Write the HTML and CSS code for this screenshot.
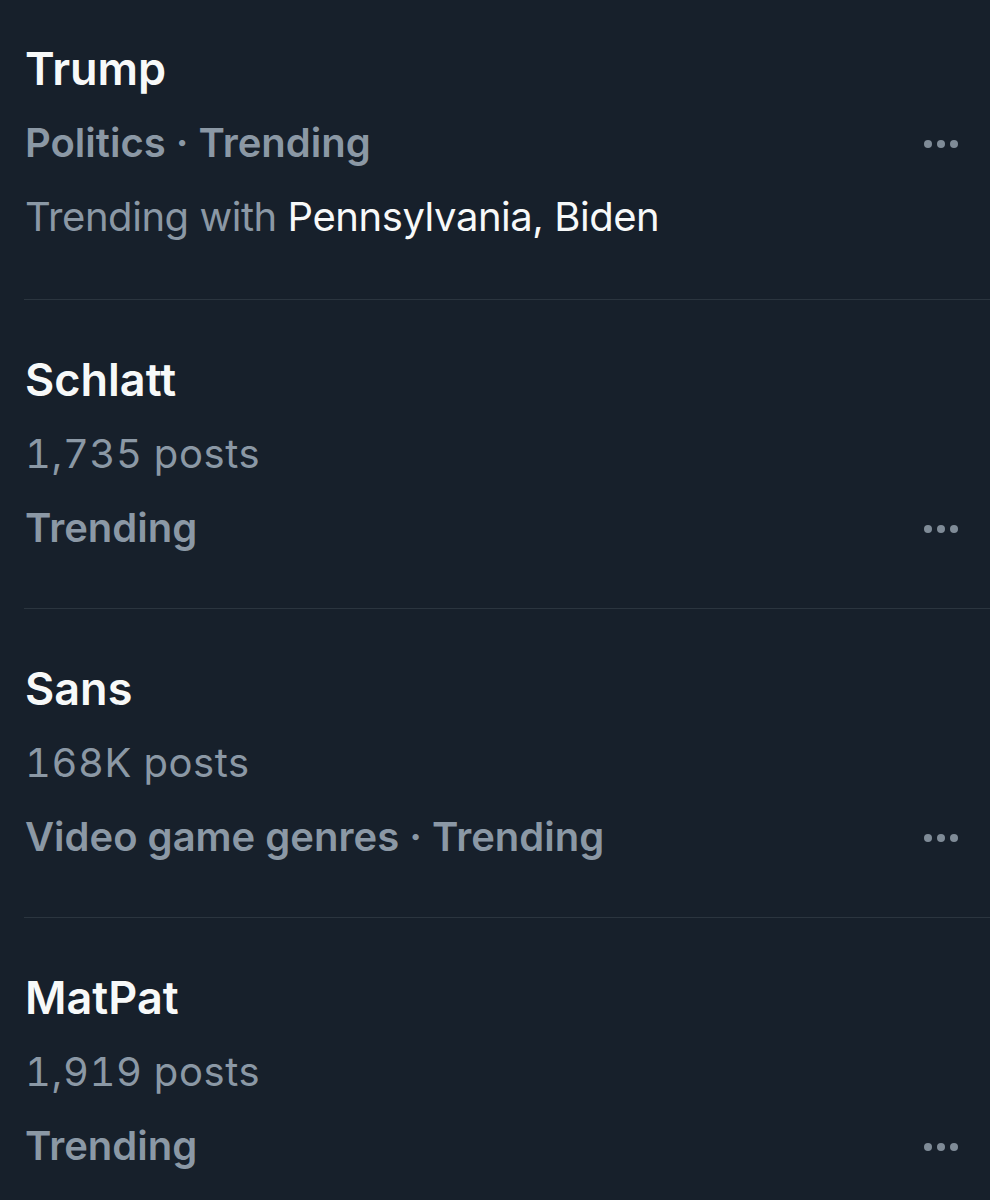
FILE: index.html
```html
<!DOCTYPE html>
<html lang="en">
<head>
    <meta charset="UTF-8">
    <meta name="viewport" content="width=device-width, initial-scale=1.0">
    <title>Trends</title>
    <link rel="stylesheet" href="styles.css">
</head>
<body>
    <div class="trends">
        <div class="trend first">
            <div class="title">Trump</div>
            <div class="line category">
                <span>Politics · Trending</span>
                <span class="more"><i></i><i></i><i></i></span>
            </div>
            <div class="line">Trending with <span class="bright">Pennsylvania, Biden</span></div>
        </div>

        <div class="trend">
            <div class="title">Schlatt</div>
            <div class="line count">1,735 posts</div>
            <div class="line category">
                <span>Trending</span>
                <span class="more"><i></i><i></i><i></i></span>
            </div>
        </div>

        <div class="trend">
            <div class="title">Sans</div>
            <div class="line count">168K posts</div>
            <div class="line category">
                <span>Video game genres · Trending</span>
                <span class="more"><i></i><i></i><i></i></span>
            </div>
        </div>

        <div class="trend">
            <div class="title">MatPat</div>
            <div class="line count">1,919 posts</div>
            <div class="line category">
                <span>Trending</span>
                <span class="more"><i></i><i></i><i></i></span>
            </div>
        </div>
    </div>
</body>
</html>
```

FILE: styles.css
```css
body {
    margin: 0;
    padding: 0;
    background: #17202b;
    color: #f7f9f9;
    font-family: Inter, "Noto Sans", sans-serif;
    overflow: hidden;
}

.trends {
    display: flex;
    flex-direction: column;
}

.trend {
    margin-left: 24px;
    padding: 43px 32px 43px 1px;
    border-bottom: 1px solid #2b353f;
}

.trend.first {
    padding-top: 32px;
    padding-bottom: 45px;
}

.title {
    font-size: 45px;
    font-weight: 600;
    line-height: 74px;
    letter-spacing: 0;
}

.line {
    font-size: 40px;
    font-weight: 400;
    line-height: 74px;
    color: #8b98a5;
    letter-spacing: -0.45px;
}

.line .bright {
    color: #f7f9f9;
}

.count {
    font-feature-settings: "tnum";
    letter-spacing: 0.6px;
}

.category {
    display: flex;
    justify-content: space-between;
    align-items: center;
    font-weight: 600;
    letter-spacing: 0;
}

.more {
    display: flex;
    gap: 5px;
    margin-top: 2px;
}

.more i {
    width: 8px;
    height: 8px;
    border-radius: 50%;
    background: #7f8b97;
}
```
